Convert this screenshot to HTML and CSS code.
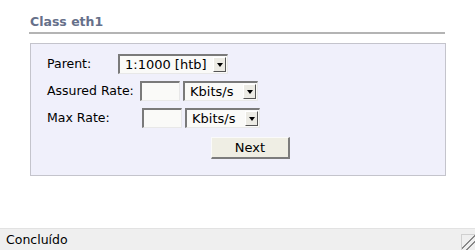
FILE: index.html
```html
<!DOCTYPE html>
<html lang="pt">
<head>
  <meta charset="UTF-8">
  <title>Class eth1</title>
  <link rel="stylesheet" href="styles.css">
</head>
<body>
  <div class="page">
    <h2 class="section-title">Class eth1</h2>

    <form class="panel">
      <div class="row">
        <label class="lbl lbl-parent">Parent:</label>
        <div class="select sel-parent"><span>1:1000 [htb]</span><i class="arrow"></i></div>
      </div>
      <div class="row">
        <label class="lbl lbl-assured">Assured Rate:</label>
        <div class="field"></div>
        <div class="select sel-unit"><span>Kbits/s</span><i class="arrow"></i></div>
      </div>
      <div class="row">
        <label class="lbl lbl-max">Max Rate:</label>
        <div class="field"></div>
        <div class="select sel-unit"><span>Kbits/s</span><i class="arrow"></i></div>
      </div>
      <div class="row row-btn">
        <button type="button" class="btn">Next</button>
      </div>
    </form>
  </div>

  <!-- barra de estado -->
  <div class="statusbar">
    <span>Concluído</span>
    <div class="grip"></div>
  </div>
</body>
</html>
```

FILE: styles.css
```css
/* Generale */
html, body {
  height: 100%;
}

body {
  margin: 0;
  background: #ffffff;
  font-family: "DejaVu Sans", Verdana, sans-serif;
  font-size: 12.5px;
  color: #000;
  display: flex;
  flex-direction: column;
  overflow: hidden;
}

.page {
  flex: 1;
  padding: 14px 0 0 30px;
  width: 415px;
}

/* Titolo sezione */
.section-title {
  margin: 0;
  font-size: 12.5px;
  font-weight: bold;
  color: #66708a;
  padding-bottom: 3px;
  border-bottom: 2px solid #b4b4b4;
  width: 415px;
  margin-left: -1px;
  padding-left: 1px;
}

/* Pannello form */
.panel {
  margin-top: 9px;
  background: #f0f0fb;
  border: 1px solid #c4c4cc;
  padding: 9px 0 16px 16px;
  width: 398px;
  height: 106px;
}

.row {
  display: flex;
  align-items: center;
  height: 21px;
  margin-bottom: 6px;
}

.lbl {
  display: block;
}

.lbl-parent { width: 71px; }
.lbl-assured { width: 93px; }
.lbl-max { width: 95px; }

/* Campi stile windows classico */
.field,
.select {
  height: 17px;
  border-top: 2px solid #7a7a7a;
  border-left: 2px solid #7a7a7a;
  border-right: 1px solid #e8e8e8;
  border-bottom: 1px solid #e8e8e8;
  background: #fafaf8;
  box-sizing: content-box;
}

.field {
  width: 37px;
  margin-right: 3px;
}

.select {
  display: flex;
  align-items: center;
  padding-left: 5px;
  font-size: 13px;
}

.select span {
  flex: 1;
}

.sel-parent { width: 102px; }
.sel-unit { width: 67px; }

.arrow {
  width: 13px;
  height: 15px;
  margin-right: 1px;
  background: #ecebe4;
  border-right: 1px solid #555;
  border-bottom: 1px solid #555;
  border-top: 1px solid #fff;
  border-left: 1px solid #fff;
  box-sizing: border-box;
  position: relative;
}

.arrow::after {
  content: "";
  position: absolute;
  left: 3px;
  top: 5px;
  border-left: 3.5px solid transparent;
  border-right: 3.5px solid transparent;
  border-top: 4px solid #000;
}

.row-btn {
  margin-top: 9px;
  padding-left: 164px;
}

.btn {
  width: 79px;
  height: 22px;
  font-family: "DejaVu Sans", Verdana, sans-serif;
  font-size: 13px;
  color: #000;
  background: #efeee4;
  border-top: 1px solid #fafafa;
  border-left: 1px solid #fafafa;
  border-right: 2px solid #7c7c7c;
  border-bottom: 2px solid #7c7c7c;
  padding: 0;
}

/* Barra di stato */
.statusbar {
  height: 21px;
  background: #efefef;
  border-top: 1px solid #e2e2e2;
  display: flex;
  align-items: center;
  justify-content: space-between;
  padding-left: 6px;
  font-size: 12.5px;
}

.grip {
  width: 13px;
  height: 15px;
  margin-top: 5px;
  border-top: 1px solid #d0d0d0;
  border-left: 1px solid #d0d0d0;
  background:
    linear-gradient(135deg, transparent 45%, #888 45%, #888 52%, transparent 52%, transparent 65%, #888 65%, #888 72%, transparent 72%);
}
```
